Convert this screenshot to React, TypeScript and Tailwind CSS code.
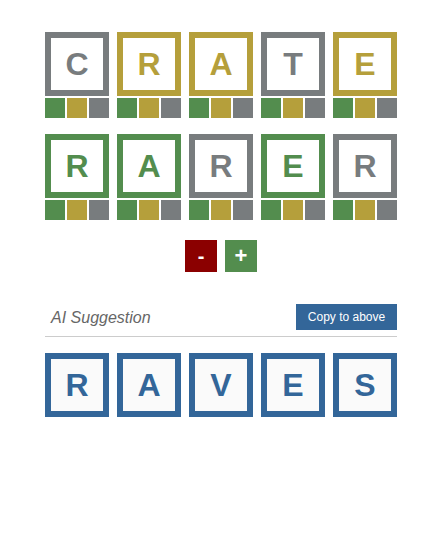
const GRAY = '#787c7e'
const YELLOW = '#b59f3b'
const GREEN = '#538d4e'

type Color = 'gray' | 'yellow' | 'green'

const tileCls: Record<Color, string> = {
  gray: 'border-[#787c7e] text-[#787c7e]',
  yellow: 'border-[#b59f3b] text-[#b59f3b]',
  green: 'border-[#538d4e] text-[#538d4e]',
}

const rows: { letter: string; color: Color }[][] = [
  [
    { letter: 'C', color: 'gray' },
    { letter: 'R', color: 'yellow' },
    { letter: 'A', color: 'yellow' },
    { letter: 'T', color: 'gray' },
    { letter: 'E', color: 'yellow' },
  ],
  [
    { letter: 'R', color: 'green' },
    { letter: 'A', color: 'green' },
    { letter: 'R', color: 'gray' },
    { letter: 'E', color: 'green' },
    { letter: 'R', color: 'gray' },
  ],
]

function Tile({ letter, color }: { letter: string; color: Color }) {
  return (
    <div className="flex flex-col gap-[2px]">
      <div
        className={`flex h-[64px] w-[64px] items-center justify-center border-[6px] bg-white text-[32px] font-bold ${tileCls[color]}`}
      >
        {letter}
      </div>
      <div className="flex gap-[2px]">
        <div className="h-[20px] w-[20px]" style={{ background: GREEN }} />
        <div className="h-[20px] w-[20px]" style={{ background: YELLOW }} />
        <div className="h-[20px] w-[20px]" style={{ background: GRAY }} />
      </div>
    </div>
  )
}

export default function App() {
  return (
    <div className="min-h-[550px] bg-white pl-[45px] pt-[32px]" style={{ fontFamily: '"Liberation Sans", Arial, sans-serif' }}>
      <div className="flex w-[352px] flex-col">
        {/* Guess rows */}
        <div className="flex flex-col gap-[16px]">
          {rows.map((row, i) => (
            <div key={i} className="flex gap-[8px]">
              {row.map((t, j) => (
                <Tile key={j} letter={t.letter} color={t.color} />
              ))}
            </div>
          ))}
        </div>

        {/* Row controls */}
        <div className="mt-[20px] flex justify-center gap-[8px]">
          <button className="flex h-[32px] w-[32px] items-center justify-center bg-[#8b0000] text-[20px] font-bold leading-none text-white">
            -
          </button>
          <button className="flex h-[32px] w-[32px] items-center justify-center bg-[#538d4e] text-[22px] font-bold leading-none text-white">
            +
          </button>
        </div>

        {/* AI suggestion */}
        <div className="mt-[32px] flex items-center justify-between border-b border-[#cccccc] pb-[6px]">
          <span className="pl-[6px] pt-[1px] text-[16px] italic text-[#666666]">AI Suggestion</span>
          <button className="h-[26px] w-[101px] bg-[#336699] text-[12px] text-white">Copy to above</button>
        </div>

        <div className="mt-[16px] flex gap-[8px]">
          {['R', 'A', 'V', 'E', 'S'].map((l, i) => (
            <div
              key={i}
              className="flex h-[64px] w-[64px] items-center justify-center border-[6px] border-[#336699] bg-[#fafafa] text-[32px] font-bold text-[#336699]"
            >
              {l}
            </div>
          ))}
        </div>
      </div>
    </div>
  )
}
